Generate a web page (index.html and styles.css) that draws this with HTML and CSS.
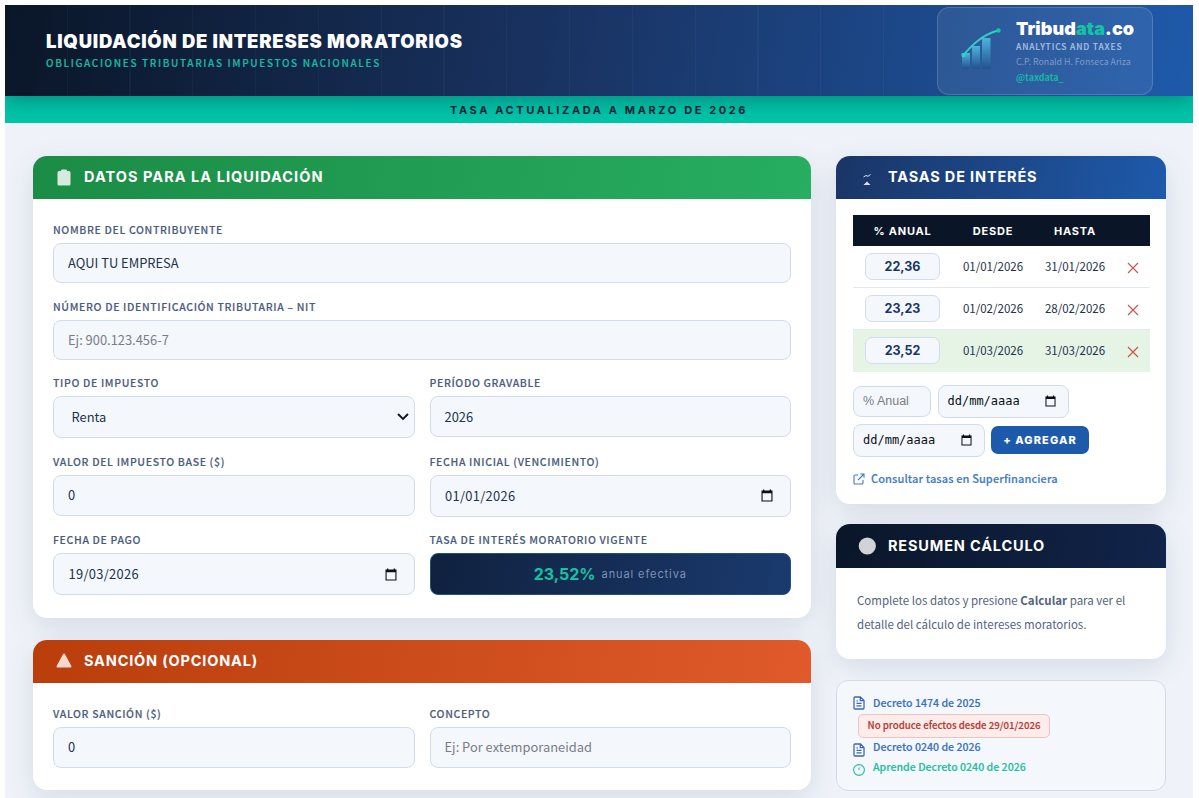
FILE: index.html
```
<!DOCTYPE html>
<html lang="es">
<head>
<meta charset="utf-8">
<title>Liquidación de Intereses Moratorios</title>
<link rel="stylesheet" href="styles.css">
</head>
<body>
<svg class="defs" width="0" height="0" aria-hidden="true">
  <symbol id="cal" viewBox="0 0 12 13"><path d="M2 .5h1.300v1.100h5.400V.5H10v1.100h1.500v10.900H.5V1.600H2zM1.600 4.300v7.100h8.800V4.300z" fill="#0b0f17" fill-rule="evenodd"/></symbol>
  <symbol id="cross" viewBox="0 0 12 12"><path d="M1 1l10 10M11 1L1 11" stroke="#cb554c" stroke-width="1.15" fill="none"/></symbol>
  <symbol id="doc" viewBox="0 0 12 14"><path d="M1 2a1 1 0 0 1 1-1h5.400L11 4.600V12a1 1 0 0 1-1 1H2a1 1 0 0 1-1-1zM7.300 1v3.700H11M3.500 7.300h5M3.500 9.900h5M3.500 4.900h1.300" fill="none" stroke="#3d68b4" stroke-width="1.300"/></symbol>
</svg>
<div class="page">
  <header class="top">
    <div class="titles">
      <h1 class="title">LIQUIDACIÓN DE INTERESES MORATORIOS</h1>
      <p class="subtitle">OBLIGACIONES TRIBUTARIAS IMPUESTOS NACIONALES</p>
    </div>
    <div class="brand">
      <svg class="logo" width="42" height="44" viewBox="0 0 42 44">
        <defs><linearGradient id="bar" x1="0" y1="0" x2="0" y2="1"><stop offset="0" stop-color="#4bb4dc"/><stop offset="1" stop-color="#24508f"/></linearGradient></defs>
        <rect x="2" y="26" width="8" height="16" fill="url(#bar)"/>
        <rect x="12" y="19" width="8" height="23" fill="url(#bar)"/>
        <rect x="22" y="11" width="8.500" height="31" fill="url(#bar)"/>
        <path d="M3 28.500C12 18 22 8 38 3.500" fill="none" stroke="#2ed0c8" stroke-width="1.900"/>
        <circle cx="3.500" cy="28" r="2.200" fill="#2ed0c8"/><circle cx="38.500" cy="3.500" r="2.200" fill="#12c8aa"/>
      </svg>
      <div class="brand-text">
        <div class="brand-name">Tribud<span class="accent">ata</span>.co</div>
        <div class="brand-tag">ANALYTICS AND TAXES</div>
        <div class="brand-author">C.P. Ronald H. Fonseca Ariza</div>
        <div class="brand-handle">@taxdata_</div>
      </div>
    </div>
  </header>
  <div class="band"><span class="band-text">TASA ACTUALIZADA A MARZO DE 2026</span></div>

  <div class="content">
    <main class="col">
      <section class="card">
        <h2 class="card-head green">
          <svg class="head-icon" width="18" height="18" viewBox="0 0 18 18"><path d="M6 1.500C6 .7 6.700.5 7.500.5h3c.8 0 1.500.2 1.500 1V2h2a1.500 1.500 0 0 1 1.500 1.500v11.500a1.500 1.500 0 0 1-1.500 1.500H4A1.500 1.500 0 0 1 2.500 15V3.500A1.500 1.500 0 0 1 4 2h2z" fill="#d6ebdd"/></svg>
          <span>DATOS PARA LA LIQUIDACIÓN</span></h2>
        <div class="form">
          <label class="field wide"><span class="label">NOMBRE DEL CONTRIBUYENTE</span><input class="control first" value="AQUI TU EMPRESA"></label>
          <label class="field wide"><span class="label">NÚMERO DE IDENTIFICACIÓN TRIBUTARIA – NIT</span><input class="control" placeholder="Ej: 900.123.456-7"></label>
          <div class="field"><span class="label">TIPO DE IMPUESTO</span><div class="control tall select"><span>Renta</span><svg width="12" height="8" viewBox="0 0 12 8"><path d="M1 1l5 5 5-5" fill="none" stroke="#10151f" stroke-width="1.900"/></svg></div></div>
          <label class="field"><span class="label">PERÍODO GRAVABLE</span><input class="control" value="2026"></label>
          <label class="field"><span class="label">VALOR DEL IMPUESTO BASE ($)</span><input class="control first" value="0"></label>
          <div class="field"><span class="label">FECHA INICIAL (VENCIMIENTO)</span><div class="control tall date"><span>01/01/2026</span><svg width="12" height="13"><use href="#cal"/></svg></div></div>
          <div class="field"><span class="label">FECHA DE PAGO</span><div class="control tall date"><span>19/03/2026</span><svg width="12" height="13"><use href="#cal"/></svg></div></div>
          <div class="field"><span class="label">TASA DE INTERÉS MORATORIO VIGENTE</span><div class="rate"><b class="rate-num">23,52%</b><span class="rate-unit">anual efectiva</span></div></div>
        </div>
      </section>
      <section class="card">
        <h2 class="card-head orange">
          <svg class="head-icon" width="18" height="18" viewBox="0 0 18 18"><path d="M9 2.500L15.500 14.500h-13z" fill="#f6d8cd" stroke="#f6d8cd" stroke-width="2" stroke-linejoin="round"/></svg>
          <span>SANCIÓN (OPCIONAL)</span></h2>
        <div class="form short">
          <label class="field"><span class="label">VALOR SANCIÓN ($)</span><input class="control first" value="0"></label>
          <label class="field"><span class="label">CONCEPTO</span><input class="control first" placeholder="Ej: Por extemporaneidad"></label>
        </div>
      </section>
    </main>

    <aside class="col side">
      <section class="card">
        <h2 class="card-head blue">
          <svg class="head-icon" width="18" height="18" viewBox="0 0 18 18"><path d="M5.500 8l2.500-1.500 2 .8L12.500 5.500" fill="none" stroke="#dbe4f2" stroke-width="1"/><path d="M5.500 16l3.500-3.500 3.500 3.500z" fill="#dbe4f2"/></svg>
          <span>TASAS DE INTERÉS</span></h2>
        <div class="rates">
          <div class="row row-head"><span>% ANUAL</span><span>DESDE</span><span>HASTA</span><span></span></div>
          <div class="row"><b class="pill">22,36</b><span class="day">01/01/2026</span><span class="day">31/01/2026</span><svg width="12" height="12"><use href="#cross"/></svg></div>
          <div class="row"><b class="pill">23,23</b><span class="day">01/02/2026</span><span class="day">28/02/2026</span><svg width="12" height="12"><use href="#cross"/></svg></div>
          <div class="row current"><b class="pill">23,52</b><span class="day">01/03/2026</span><span class="day">31/03/2026</span><svg width="12" height="12"><use href="#cross"/></svg></div>
          <div class="add">
            <input class="mini pct" placeholder="% Anual">
            <div class="mini mini-date"><span>dd/mm/aaaa</span><svg width="11" height="12"><use href="#cal"/></svg></div>
            <div class="mini mini-date"><span>dd/mm/aaaa</span><svg width="11" height="12"><use href="#cal"/></svg></div>
            <button class="btn">+ AGREGAR</button>
          </div>
          <a class="ext"><svg width="12" height="12" viewBox="0 0 12 12"><path d="M5 2H2a1 1 0 0 0-1 1v7a1 1 0 0 0 1 1h7a1 1 0 0 0 1-1V7M7.300 1H11v3.700M11 1L5 7" fill="none" stroke="#3f7cc6" stroke-width="1.100"/></svg><span>Consultar tasas en Superfinanciera</span></a>
        </div>
      </section>
      <section class="card">
        <h2 class="card-head navy">
          <svg class="head-icon" width="18" height="18" viewBox="0 0 18 18"><circle cx="9.300" cy="9" r="8.600" fill="#d0d3d8"/></svg>
          <span>RESUMEN CÁLCULO</span></h2>
        <p class="summary">Complete los datos y presione <b>Calcular</b> para ver el<br>detalle del cálculo de intereses moratorios.</p>
      </section>
      <section class="links">
        <a class="link"><svg width="12" height="14"><use href="#doc"/></svg><span>Decreto 1474 de 2025</span></a>
        <div class="badge">No produce efectos desde 29/01/2026</div>
        <a class="link low"><svg width="12" height="14"><use href="#doc"/></svg><span>Decreto 0240 de 2026</span></a>
        <a class="link low teal"><svg width="12" height="12" viewBox="0 0 12 12"><circle cx="6" cy="6" r="5.400" fill="none" stroke="#22bd9c" stroke-width="1.100"/><path d="M6 3.500v2.500" stroke="#22bd9c" stroke-width="1.100"/></svg><span>Aprende Decreto 0240 de 2026</span></a>
      </section>
    </aside>
  </div>
</div>
</body>
</html>
```
FILE: styles.css
```
* { box-sizing: border-box; }
:root {
  --body: "Noto Sans CJK SC", "Noto Sans", sans-serif;
  --head: Inter, "Open Sans", sans-serif;
}
html, body { height: 798px; overflow: hidden; }
body { margin: 0; padding: 5px 6px 0 5px; background: #fff; font-family: var(--body); color: #22324a; }
.defs { display: block; height: 0; }
.page { height: 793px; overflow: hidden; background: #eff3f9; }

.top {
  position: relative; z-index: 1; height: 91px; padding: 0 40px 0 41px;
  display: flex; justify-content: space-between; align-items: flex-start;
  background:
    repeating-linear-gradient(90deg, transparent 0, transparent 61.500px, rgba(255,255,255,.03) 61.500px, rgba(255,255,255,.03) 62.800px) 0 0 / 930px 100% no-repeat,
    linear-gradient(100deg, #0a1628 0%, #1a3566 50%, #1e5aab 100%);
  box-shadow: 0 4px 20px rgba(10,22,40,.34);
}
.titles { padding-top: 24px; }
.title { margin: 0; font: 900 18.500px/24px var(--head); color: #fff; letter-spacing: .75px; white-space: nowrap; }
.subtitle { margin: 3px 0 0; font-size: 10px; line-height: 14px; font-weight: 500; letter-spacing: 1.640px; color: #19b9a3; -webkit-text-stroke: .2px #19b9a3; white-space: nowrap; }
.brand {
  width: 216px; height: 88px; margin-top: 2px; padding: 10px 0 0 22px; display: flex; gap: 14px;
  border: 1px solid rgba(255,255,255,.16); border-radius: 12px; background: rgba(255,255,255,.08);
}
.logo { margin-top: 9px; }
.brand-text { white-space: nowrap; }
.brand-name { font: 900 18px/22px var(--head); letter-spacing: .1px; color: #fff; }
.accent { color: #14c3a4; }
.brand-tag { font-size: 8.500px; line-height: 12px; font-weight: 500; letter-spacing: .85px; color: #a9bfe0; -webkit-text-stroke: .15px #a9bfe0; }
.brand-author { margin-top: 3px; font-size: 8.800px; line-height: 13px; color: #8099c6; }
.brand-handle { margin-top: 2px; font-size: 9px; line-height: 15px; font-weight: 700; color: #12b9a6; }
.band { height: 27px; display: flex; justify-content: center; align-items: center; background: #00c5a9; }
.band-text { font: 700 11px/14px var(--head); letter-spacing: 2.600px; color: #0c2436; }

.content { display: grid; grid-template-columns: 778px 330px; gap: 25px; padding: 33px 0 0 28px; }
.col { display: flex; flex-direction: column; gap: 21.500px; }
.side { gap: 20.500px; }
.card { border-radius: 14px; background: #fff; box-shadow: 0 8px 30px rgba(20,30,70,.11); }
.card-head {
  height: 43px; margin: 0; padding: 0 22px; display: flex; align-items: center; gap: 11px;
  border-radius: 14px 14px 0 0; font: 700 14.500px/20px var(--head); letter-spacing: 1.050px; color: #fff; white-space: nowrap;
}
.card-head span { padding-bottom: 2px; }
.side .card-head { letter-spacing: .84px; }
.side .card-head span { padding-left: 1px; }
.card-head.navy span { padding-bottom: 0; }
.head-icon { flex: none; }
.green { background: linear-gradient(100deg, #1b8c45, #27ae60); }
.orange { letter-spacing: .83px; background: linear-gradient(100deg, #b93e0c, #e05a2b); }
.card-head.orange span { padding-bottom: 0; }
.blue { background: linear-gradient(100deg, #1a3566, #1e5aab); }
.navy { height: 44px; background: linear-gradient(100deg, #0a1628, #11244a); }

.form { display: grid; grid-template-columns: 1fr 1fr; grid-template-rows: 60px 60px 62px 62px 62px; gap: 16.500px 15px; padding: 24px 20px 23px; }
.form.short { grid-template-rows: 61px; padding: 24px 20px 22px; }
.wide { grid-column: 1 / -1; }
.field { display: flex; flex-direction: column; gap: 6px; }
.label { font-size: 10.500px; line-height: 14px; font-weight: 500; letter-spacing: .65px; color: #4a5c7d; -webkit-text-stroke: .15px #4a5c7d; white-space: nowrap; }
.control {
  width: 100%; height: 41px; padding: 0 14px; border: 1px solid #d0dcec; border-radius: 8px; background: #f4f8fd;
  font: 400 12.900px/20px var(--body); color: #22324a;
}
.first { padding-bottom: 2px; }
.control::placeholder { color: #7a7d84; opacity: 1; }
.tall { height: 43px; display: flex; justify-content: space-between; align-items: center; }
.select { padding: 0 5px 0 17.500px; }
.date { padding: 0 17px 0 14.500px; }
.date span { letter-spacing: .3px; }
.rate {
  height: 42px; padding-bottom: 1px; display: flex; justify-content: center; align-items: center; gap: 6px;
  border: 1px solid #1b5673; border-radius: 8px; background: linear-gradient(100deg, #10213f, #1a3a6e);
}
.rate-num { font: 700 16px/20px var(--head); color: #14c3a4; }
.rate-unit { font: 400 11px/18px var(--head); letter-spacing: .9px; color: #7f92b5; }

.rates { padding: 16px 16px 16px 17px; }
.row {
  display: grid; grid-template-columns: 99px 82px 82px 1fr; justify-items: center; align-items: center;
  height: 42px; font-size: 11.500px; line-height: 18px; border-bottom: 1px solid #e2e8f2; white-space: nowrap;
}
.row-head { height: 31px; border: 0; background: #0a1628; color: #fff; font: 700 11px/16px var(--head); letter-spacing: .8px; }
.row svg { margin-top: 2px; }
.day { padding-bottom: 2px; }
.pill {
  width: 75px; height: 27px; border: 1px solid #d0dcf0; border-radius: 7px; background: #f4f8fd;
  text-align: center; font: 700 12.500px/26px var(--head); color: #1a3566;
}
.current { border-color: #e6f4e6; background: #e6f4e6; }
.add { display: flex; flex-wrap: wrap; align-items: center; gap: 5.500px 6.500px; margin-top: 13px; }
.mini { height: 33px; border: 1px solid #d0dcec; border-radius: 8px; background: #f4f8fd; }
.pct { width: 78px; height: 31px; padding: 0 9px 2px; font: 400 12.500px/18px "Liberation Sans", Arial, sans-serif; }
.pct::placeholder { color: #7a7d84; opacity: 1; }
.mini-date { width: 131.500px; padding: 0 12px 1px 9px; display: flex; justify-content: space-between; align-items: center; font: 12px/18px "DejaVu Sans Mono", monospace; color: #0b0f17; }
.btn { width: 98px; height: 28px; margin-bottom: 1px; padding: 0; border: 0; border-radius: 7px; background: #1e5aab; color: #fff; font: 800 11px/16px var(--head); letter-spacing: 1.100px; white-space: nowrap; }
.ext { display: flex; align-items: center; gap: 6px; height: 18px; margin-top: 13px; font-size: 11px; line-height: 18px; font-weight: 500; letter-spacing: .12px; color: #3f7cc6; -webkit-text-stroke: .15px #3f7cc6; white-space: nowrap; }
.ext span { padding-bottom: 1px; }
.summary { margin: 0; padding: 19.500px 21px 23.500px; font-size: 11.500px; line-height: 24px; color: #52637f; white-space: nowrap; }
.links { height: 111px; padding: 13px 16px; border: 1px solid #d3dbe9; border-radius: 12px; background: #f4f8fd; }
.link { display: flex; align-items: center; gap: 8px; height: 18px; font-size: 10.600px; line-height: 18px; font-weight: 500; color: #3a70c0; -webkit-text-stroke: .15px currentColor; white-space: nowrap; }
.low { height: 20px; }
.low svg { margin-top: 7px; }
.teal { color: #22bd9c; }
.badge { width: 192px; height: 24px; margin: 2px 0 -1px 5px; border: 1px solid #f2c2c0; border-radius: 5px; background: #fdecea; text-align: center; font-size: 9.700px; line-height: 21px; font-weight: 500; color: #b53a34; -webkit-text-stroke: .15px currentColor; white-space: nowrap; }
```
